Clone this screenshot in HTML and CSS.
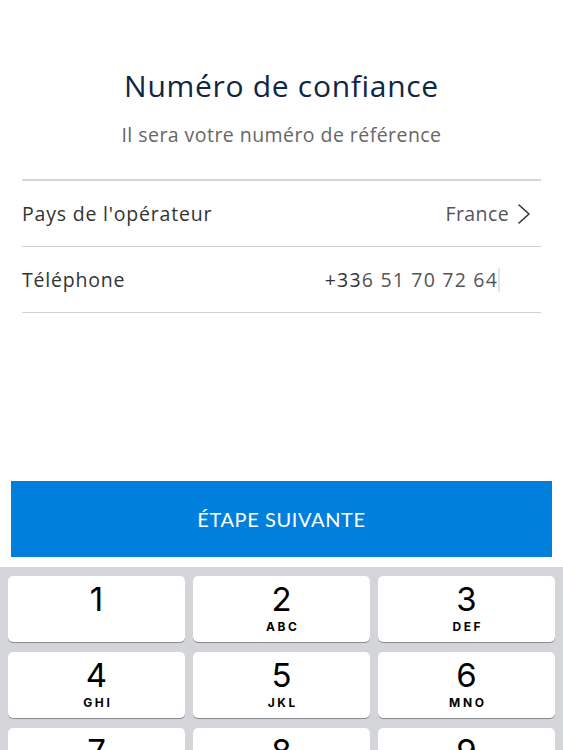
FILE: index.html
```html
<!DOCTYPE html>
<html lang="fr">
<head>
<meta charset="utf-8">
<title>Numéro de confiance</title>
<link rel="stylesheet" href="styles.css">
</head>
<body>
<div class="screen">
  <header class="head">
    <h1 class="title">Numéro de confiance</h1>
    <p class="subtitle">Il sera votre numéro de référence</p>
  </header>
  <ul class="list">
    <li class="row">
      <span class="label">Pays de l'opérateur</span>
      <span class="value">France
        <svg class="chev" width="14" height="22" viewBox="0 0 14 22"><path d="M2 2 L12 11 L2 20" fill="none" stroke="#333" stroke-width="1.6" stroke-linecap="round" stroke-linejoin="round"/></svg>
      </span>
    </li>
    <li class="row">
      <span class="label">Téléphone</span>
      <span class="value phone"><span class="dark">+33</span>6 51 70 72 64<span class="caret"></span></span>
    </li>
  </ul>
  <button class="cta">ÉTAPE SUIVANTE</button>
  <div class="keyboard">
    <div class="key"><span class="num">1</span><span class="let"></span></div>
    <div class="key"><span class="num">2</span><span class="let">ABC</span></div>
    <div class="key"><span class="num">3</span><span class="let">DEF</span></div>
    <div class="key"><span class="num">4</span><span class="let">GHI</span></div>
    <div class="key"><span class="num">5</span><span class="let">JKL</span></div>
    <div class="key"><span class="num">6</span><span class="let">MNO</span></div>
    <div class="key"><span class="num">7</span><span class="let">PQRS</span></div>
    <div class="key"><span class="num">8</span><span class="let">TUV</span></div>
    <div class="key"><span class="num">9</span><span class="let">WXYZ</span></div>
  </div>
</div>
</body>
</html>
```
FILE: styles.css
```css
* { box-sizing: border-box; }
html, body { margin: 0; padding: 0; background: #fff; }
body { font-family: "Open Sans", Lato, sans-serif; }
.screen { width: 563px; height: 750px; overflow: hidden; display: flex; flex-direction: column; }
.screen > * { flex-shrink: 0; }
.head { padding-top: 68px; text-align: center; }
.title { margin: 0; font-size: 30px; line-height: 36px; font-weight: 400; color: #0e2742; letter-spacing: 0.7px; }
.subtitle { margin: 19px 0 0; font-size: 19.5px; line-height: 24px; color: #666; letter-spacing: 0.45px; }
.list { list-style: none; margin: 32px 22px 0; padding: 0; border-top: 2px solid #d6d6d6; }
.row { height: 66px; border-bottom: 1px solid #d0d0d0; display: flex; align-items: center; justify-content: space-between; font-size: 19.5px; letter-spacing: 0.8px; }
.label { color: #333; }
.value { color: #555; display: flex; align-items: center; letter-spacing: 0.4px; }
.chev { margin-left: 8px; margin-right: 10px; }
.phone { margin-right: 41px; letter-spacing: 1.2px; }
.dark { color: #333; }
.caret { display: inline-block; width: 2px; height: 24px; background: #d6e8f7; margin-left: 0; }
.cta { margin: 168px 11px 0; height: 76px; border: 0; background: #0080dc; color: #fff; font-family: Lato, sans-serif; font-size: 20px; letter-spacing: 0.6px; padding: 0; }
.keyboard { margin-top: 10px; flex: 1 0 auto; background: #d4d5d9; padding: 9px 8px 0; display: grid; grid-template-columns: repeat(3, 1fr); column-gap: 8px; row-gap: 10px; align-content: start; }
.key { height: 66px; background: #fff; border-radius: 5px; box-shadow: 0 1px 0 #8a8b8f; display: flex; flex-direction: column; align-items: center; font-family: Inter, "Liberation Sans", sans-serif; color: #000; }
.num { font-size: 33px; line-height: 36px; margin-top: 5px; font-weight: 400; }
.let { font-size: 12px; line-height: 14px; font-weight: 700; letter-spacing: 2.6px; margin-right: -2.6px; margin-top: 3px; }
```
